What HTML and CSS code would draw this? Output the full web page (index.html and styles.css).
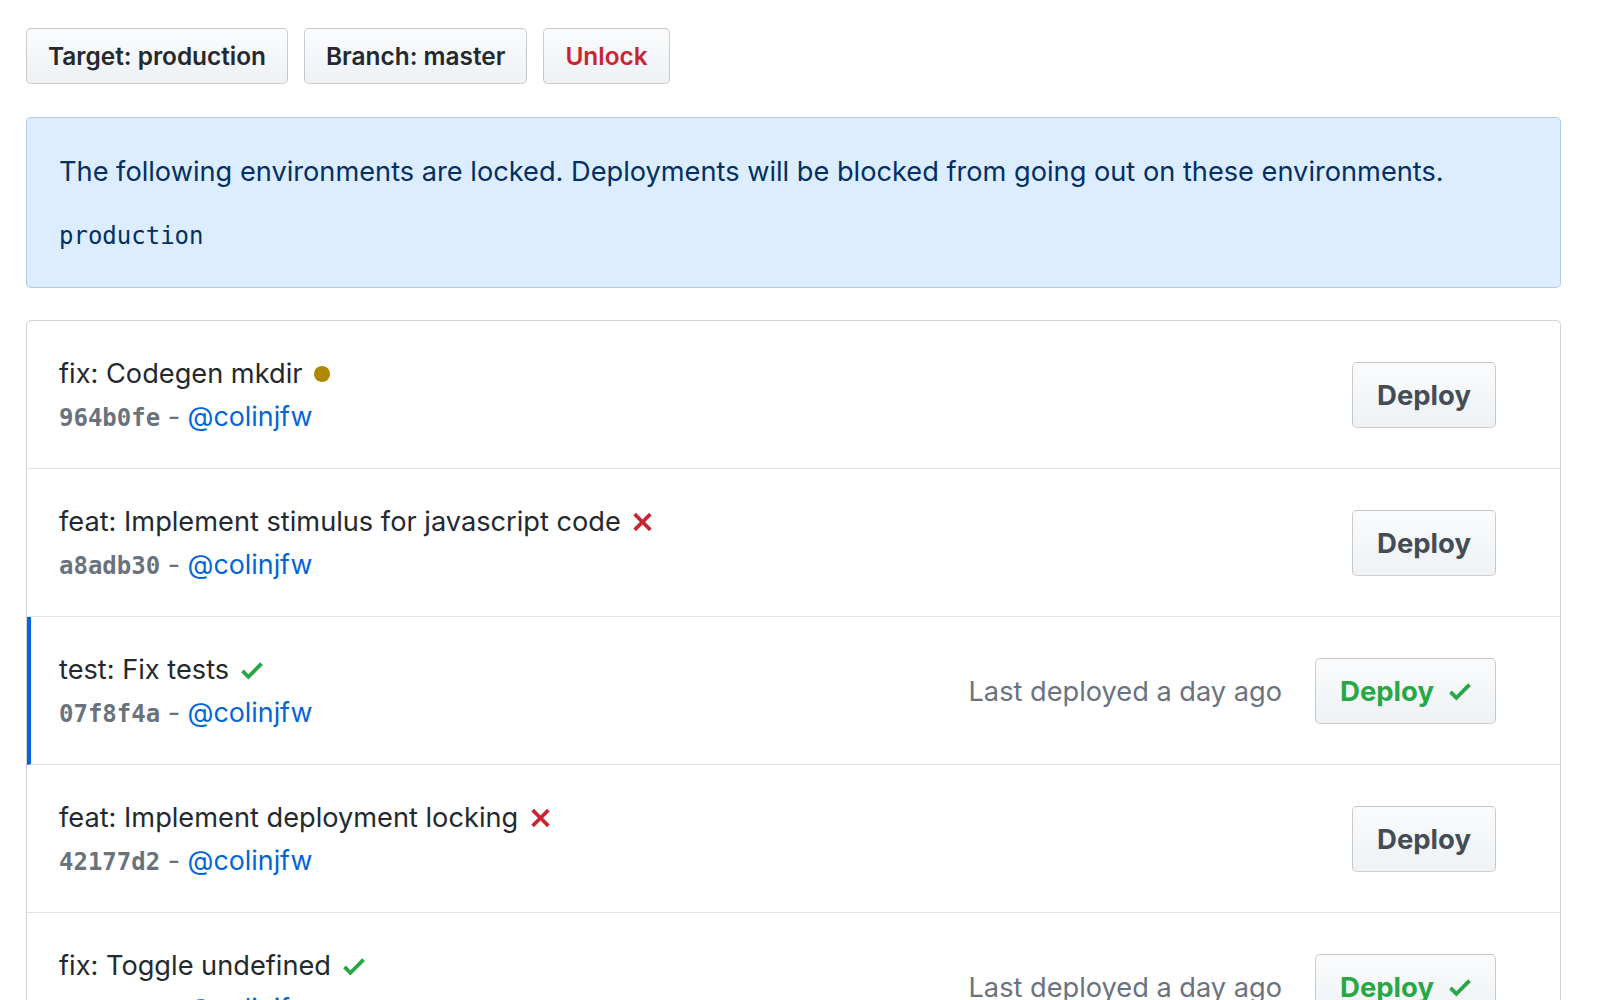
FILE: index.html
```html
<!DOCTYPE html>
<html>
<head>
<meta charset="utf-8">
<link rel="stylesheet" href="styles.css">
</head>
<body>
<div class="page">
  <div class="toolbar">
    <button class="btn">Target: production</button>
    <button class="btn">Branch: master</button>
    <button class="btn btn-danger">Unlock</button>
  </div>

  <div class="flash">
    <p class="flash-text">The following environments are locked. Deployments will be blocked from going out on these environments.</p>
    <code class="env">production</code>
  </div>

  <div class="commits">
    <div class="commit">
      <div class="commit-info">
        <div class="commit-title">fix: Codegen mkdir <svg class="icon icon-dot" viewBox="0 0 8 16" width="16" height="32"><path fill="#b08800" d="M0 8c0-2.2 1.8-4 4-4s4 1.8 4 4-1.8 4-4 4-4-1.8-4-4z"/></svg></div>
        <div class="commit-meta"><span class="sha">964b0fe</span> - <a class="author">@colinjfw</a></div>
      </div>
      <div class="commit-actions">
        <button class="btn-deploy">Deploy</button>
      </div>
    </div>

    <div class="commit">
      <div class="commit-info">
        <div class="commit-title">feat: Implement stimulus for javascript code <svg class="icon icon-x" viewBox="0 0 12 16" width="21" height="28"><path fill="#cb2431" d="M7.48 8l3.75 3.75-1.48 1.48L6 9.48l-3.75 3.75-1.48-1.48L4.52 8 .77 4.25l1.48-1.48L6 6.52l3.75-3.75 1.48 1.48L7.48 8z"/></svg></div>
        <div class="commit-meta"><span class="sha">a8adb30</span> - <a class="author">@colinjfw</a></div>
      </div>
      <div class="commit-actions">
        <button class="btn-deploy">Deploy</button>
      </div>
    </div>

    <div class="commit commit-current">
      <div class="commit-info">
        <div class="commit-title">test: Fix tests <svg class="icon icon-check" viewBox="0 0 12 16" width="22" height="29"><path fill="#28a745" d="M12 5l-8 8-4-4 1.5-1.5L4 10l6.5-6.5L12 5z"/></svg></div>
        <div class="commit-meta"><span class="sha">07f8f4a</span> - <a class="author">@colinjfw</a></div>
      </div>
      <div class="commit-actions">
        <span class="last-deployed">Last deployed a day ago</span>
        <button class="btn-deploy btn-deployed">Deploy <svg class="icon" viewBox="0 0 12 16" width="22" height="29"><path fill="#28a745" d="M12 5l-8 8-4-4 1.5-1.5L4 10l6.5-6.5L12 5z"/></svg></button>
      </div>
    </div>

    <div class="commit">
      <div class="commit-info">
        <div class="commit-title">feat: Implement deployment locking <svg class="icon icon-x" viewBox="0 0 12 16" width="21" height="28"><path fill="#cb2431" d="M7.48 8l3.75 3.75-1.48 1.48L6 9.48l-3.75 3.75-1.48-1.48L4.52 8 .77 4.25l1.48-1.48L6 6.52l3.75-3.75 1.48 1.48L7.48 8z"/></svg></div>
        <div class="commit-meta"><span class="sha">42177d2</span> - <a class="author">@colinjfw</a></div>
      </div>
      <div class="commit-actions">
        <button class="btn-deploy">Deploy</button>
      </div>
    </div>

    <div class="commit">
      <div class="commit-info">
        <div class="commit-title">fix: Toggle undefined <svg class="icon icon-check" viewBox="0 0 12 16" width="22" height="29"><path fill="#28a745" d="M12 5l-8 8-4-4 1.5-1.5L4 10l6.5-6.5L12 5z"/></svg></div>
        <div class="commit-meta"><span class="sha">c41a9e2</span> - <a class="author">@colinjfw</a></div>
      </div>
      <div class="commit-actions">
        <span class="last-deployed">Last deployed a day ago</span>
        <button class="btn-deploy btn-deployed">Deploy <svg class="icon" viewBox="0 0 12 16" width="22" height="29"><path fill="#28a745" d="M12 5l-8 8-4-4 1.5-1.5L4 10l6.5-6.5L12 5z"/></svg></button>
      </div>
    </div>
  </div>
</div>
</body>
</html>
```

FILE: styles.css
```css
html, body {
  margin: 0;
  padding: 0;
  background: #ffffff;
}

body {
  font-family: Inter, "Liberation Sans", sans-serif;
  color: #24292e;
  overflow: hidden;
  height: 1000px;
}

.page {
  padding: 28px 39px 0 26px;
}

.toolbar {
  display: flex;
  gap: 16px;
  margin-bottom: 33px;
}

.btn {
  font-family: Inter, "Liberation Sans", sans-serif;
  font-size: 24.4px;
  font-weight: 600;
  line-height: 34px;
  padding: 10px 21px;
  color: #24292e;
  background: linear-gradient(#fafbfc, #eff3f6 90%);
  border: 1px solid rgba(27, 31, 35, 0.2);
  border-radius: 5px;
  cursor: pointer;
}

.btn-danger {
  color: #cb2431;
}

.flash {
  background: #dbedff;
  border: 1px solid rgba(4, 66, 137, 0.2);
  border-radius: 5px;
  padding: 35px 32px 33px;
  color: #032f62;
  margin-bottom: 32px;
}

.flash-text {
  margin: 0 0 27px;
  font-size: 27.2px;
  line-height: 38px;
}

.env {
  display: block;
  font-family: "DejaVu Sans Mono", monospace;
  font-size: 24px;
  line-height: 36px;
  color: #032f62;
}

.commits {
  border: 1px solid #d1d5da;
  border-bottom: none;
  border-radius: 5px 5px 0 0;
}

.commit {
  display: flex;
  align-items: center;
  justify-content: space-between;
  padding: 32px 64px 31px 32px;
  border-bottom: 1px solid #e1e4e8;
}

.commit-current {
  border-left: 4px solid #0366d6;
  padding-left: 28px;
}

.commit-title {
  font-size: 27.2px;
  line-height: 42px;
  height: 42px;
  display: flex;
  align-items: center;
  white-space: pre;
}

.icon {
  display: inline-block;
  margin-left: 4px;
}

.commit-meta {
  display: flex;
  align-items: baseline;
  height: 42px;
  font-size: 26.8px;
  line-height: 42px;
  color: #6a737d;
  white-space: pre;
}

.sha {
  font-family: "DejaVu Sans Mono", monospace;
  font-weight: bold;
  font-size: 24px;
  color: #6a737d;
}

.author {
  color: #0366d6;
  text-decoration: none;
}

.commit-actions {
  display: flex;
  align-items: center;
  gap: 33px;
}

.last-deployed {
  font-size: 27.2px;
  color: #6a737d;
}

.btn-deploy {
  font-family: Inter, "Liberation Sans", sans-serif;
  font-size: 27.5px;
  font-weight: 700;
  line-height: 32px;
  padding: 16px 24px;
  color: #444d56;
  background: linear-gradient(#fafbfc, #eff3f6 90%);
  border: 1px solid rgba(27, 31, 35, 0.2);
  border-radius: 5px;
  display: inline-flex;
  align-items: center;
  gap: 15px;
}

.btn-deployed {
  color: #28a745;
}

.btn-deployed .icon {
  margin-left: 0;
}
```
